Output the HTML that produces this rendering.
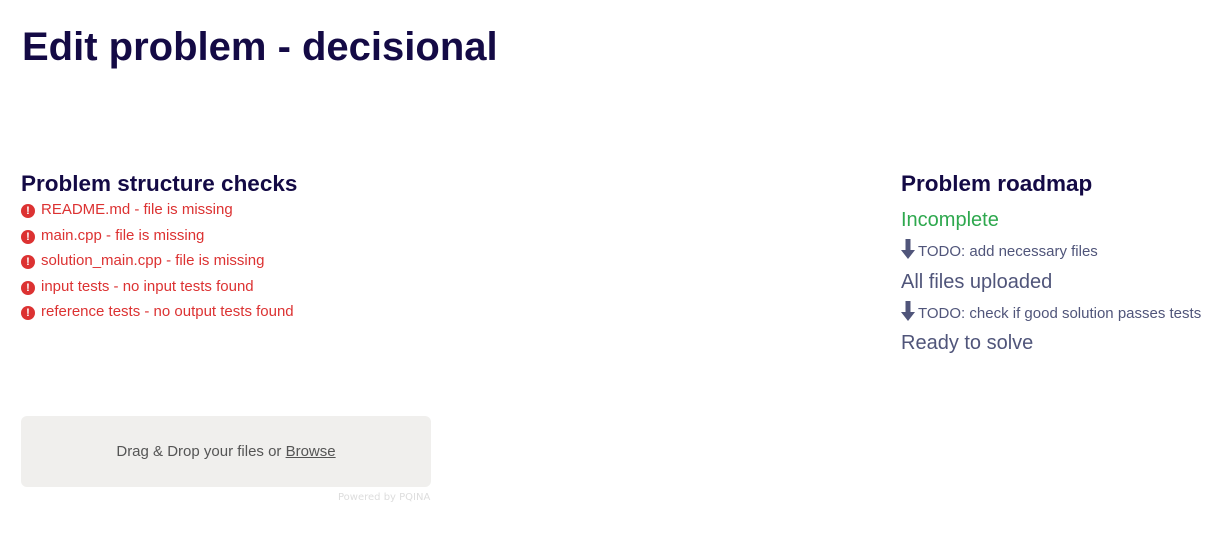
<!DOCTYPE html>
<html><head><style>
body{margin:0;background:#fff;font-family:"Liberation Sans",Arial,sans-serif;}
.t{position:absolute;left:22px;top:22px;margin:0;font-size:40px;font-weight:bold;color:#140a45;line-height:50px;white-space:nowrap}
h2{position:absolute;margin:0;font-size:22.5px;font-weight:bold;color:#140a45;line-height:26px;white-space:nowrap}
.err{position:absolute;left:21px;color:#dc3232;font-size:15px;line-height:18px;white-space:nowrap}
.err i{display:inline-block;width:14px;height:14px;border-radius:50%;background:#dc3232;color:#fff;font-style:normal;font-weight:bold;font-size:11px;line-height:14px;text-align:center;vertical-align:0px;margin-right:6px}
.r{position:absolute;left:901px;white-space:nowrap;color:#50557a}
.big{font-size:20px;line-height:24px}
.small{font-size:15px;line-height:18px}
.drop{position:absolute;left:21px;top:416px;width:410px;height:71px;background:#f0efed;border-radius:6px;font-family:"Liberation Sans",sans-serif;font-size:15px;color:#555;text-align:center;line-height:71px}
.pw{position:absolute;left:338px;top:492px;font-size:10px;color:#ddd;font-family:"DejaVu Sans",sans-serif}
</style></head><body>
<h1 class="t">Edit problem - decisional</h1>
<h2 style="left:21px;top:171px">Problem structure checks</h2>
<div class="err" style="top:201px"><i>!</i>README.md - file is missing</div>
<div class="err" style="top:227px"><i>!</i>main.cpp - file is missing</div>
<div class="err" style="top:252px"><i>!</i>solution_main.cpp - file is missing</div>
<div class="err" style="top:278px"><i>!</i>input tests - no input tests found</div>
<div class="err" style="top:303px"><i>!</i>reference tests - no output tests found</div>
<h2 style="left:901px;top:171px">Problem roadmap</h2>
<div class="r big" style="top:208px;color:#2ea84e">Incomplete</div>
<div class="r small" style="top:239px"><svg width="14" height="20" viewBox="0 0 14 20" style="vertical-align:-3px;margin-right:3px"><path d="M4.5 0h5v11h4.5L7 20 0 11h4.5z" fill="#50557a"/></svg>TODO: add necessary files</div>
<div class="r big" style="top:270px">All files uploaded</div>
<div class="r small" style="top:301px"><svg width="14" height="20" viewBox="0 0 14 20" style="vertical-align:-3px;margin-right:3px"><path d="M4.5 0h5v11h4.5L7 20 0 11h4.5z" fill="#50557a"/></svg>TODO: check if good solution passes tests</div>
<div class="r big" style="top:331px">Ready to solve</div>
<div class="drop">Drag &amp; Drop your files or <u>Browse</u></div>
<div class="pw">Powered by PQINA</div>
</body></html>
